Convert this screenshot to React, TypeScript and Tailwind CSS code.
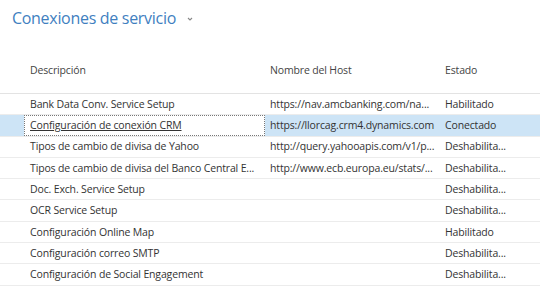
import React from "react";

const rows = [
  { desc: "Bank Data Conv. Service Setup", host: "https://nav.amcbanking.com/na...", state: "Habilitado" },
  { desc: "Configuración de conexión CRM", host: "https://llorcag.crm4.dynamics.com", state: "Conectado", selected: true },
  { desc: "Tipos de cambio de divisa de Yahoo", host: "http://query.yahooapis.com/v1/p...", state: "Deshabilita..." },
  { desc: "Tipos de cambio de divisa del Banco Central E...", host: "http://www.ecb.europa.eu/stats/...", state: "Deshabilita..." },
  { desc: "Doc. Exch. Service Setup", host: "", state: "Deshabilita..." },
  { desc: "OCR Service Setup", host: "", state: "Deshabilita..." },
  { desc: "Configuración Online Map", host: "", state: "Habilitado" },
  { desc: "Configuración correo SMTP", host: "", state: "Deshabilita..." },
  { desc: "Configuración de Social Engagement", host: "", state: "Deshabilita..." },
];

const App = () => {
  return (
    <div className="w-[540px] h-[300px] bg-white overflow-hidden font-['Open_Sans','Noto_Sans',sans-serif] text-[#333]">
      {/* title */}
      <div className="flex items-center h-[30px] pt-[6px] pl-[12px]">
        <h1 className="text-[16px] leading-[24px] text-[#3f7fbf] tracking-[-0.3px]">Conexiones de servicio</h1>
        <svg width="6" height="4" viewBox="0 0 6 4" className="ml-[11px] mt-[1px]">
          <path d="M1 1 L3 3 L5 1" stroke="#888" strokeWidth="1.1" fill="none" />
        </svg>
      </div>

      {/* header */}
      <div className="grid grid-cols-[24px_241px_175px_100px] h-[64px] items-end pb-[14px] text-[10.5px] tracking-[-0.15px] text-[#444] border-b border-[#e3e3e3]">
        <div />
        <div className="pl-[6px]">Descripción</div>
        <div className="pl-[5px]">Nombre del Host</div>
        <div className="pl-[5px]">Estado</div>
      </div>

      {/* rows */}
      {rows.map((r) => (
        <div
          key={r.desc}
          className={`grid grid-cols-[24px_241px_175px_100px] h-[21.3px] items-stretch text-[10.5px] tracking-[-0.15px] border-b border-[#ececec] ${
            r.selected ? "bg-[#cde4f6]" : ""
          }`}
        >
          <div />
          <div
            className={`flex items-center pt-[1px] whitespace-nowrap overflow-hidden ${
              r.selected ? "bg-white border border-dotted border-[#777] underline pl-[5px]" : "pl-[6px]"
            }`}
          >
            {r.desc}
          </div>
          <div className="pl-[5px] pt-[1px] flex items-center whitespace-nowrap overflow-hidden">{r.host}</div>
          <div className="pl-[5px] pt-[1px] flex items-center whitespace-nowrap overflow-hidden">{r.state}</div>
        </div>
      ))}
    </div>
  );
};

export default App;
